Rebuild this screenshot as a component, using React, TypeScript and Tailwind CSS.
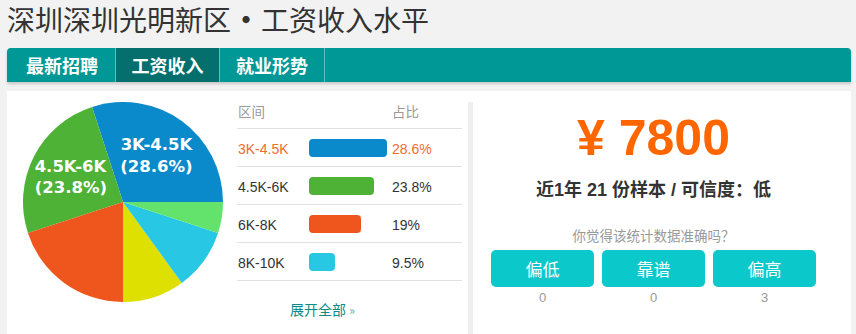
import React from "react";

const slices = [
  { v: 6, c: "#0a8acb" },
  { v: 5, c: "#4db236" },
  { v: 4, c: "#ee561e" },
  { v: 2, c: "#dde000" },
  { v: 2, c: "#28c8e4" },
  { v: 1, c: "#64e36c" },
];

function arcPath(a0: number, a1: number, r = 100, cx = 100, cy = 100) {
  const rad = (d: number) => (d * Math.PI) / 180;
  const x0 = cx + r * Math.cos(rad(a0));
  const y0 = cy - r * Math.sin(rad(a0));
  const x1 = cx + r * Math.cos(rad(a1));
  const y1 = cy - r * Math.sin(rad(a1));
  const large = a1 - a0 > 180 ? 1 : 0;
  return `M${cx},${cy} L${x0},${y0} A${r},${r} 0 ${large} 0 ${x1},${y1} Z`;
}

function Pie() {
  const total = slices.reduce((s, x) => s + x.v, 0);
  let a = 0;
  const paths = slices.map((s, i) => {
    const a0 = a;
    const a1 = a + (s.v / total) * 360;
    a = a1;
    return <path key={i} d={arcPath(a0, a1)} fill={s.c} />;
  });
  const t = {
    fontFamily: "'DejaVu Sans', sans-serif",
    fontWeight: 700,
    fontSize: "16.5px",
    fill: "#fff",
  } as React.CSSProperties;
  return (
    <svg width="200" height="200" viewBox="0 0 200 200" className="block">
      {paths}
      <text x="133.5" y="48" textAnchor="middle" style={t}>3K-4.5K</text>
      <text x="133.5" y="70" textAnchor="middle" style={t}>(28.6%)</text>
      <text x="47.5" y="70" textAnchor="middle" style={t}>4.5K-6K</text>
      <text x="48" y="91" textAnchor="middle" style={t}>(23.8%)</text>
    </svg>
  );
}

const rows = [
  { label: "3K-4.5K", pct: "28.6%", bar: "w-[78px] bg-[#0a8acb]", hi: true },
  { label: "4.5K-6K", pct: "23.8%", bar: "w-[65px] bg-[#4db236]", hi: false },
  { label: "6K-8K", pct: "19%", bar: "w-[52px] bg-[#ee561e]", hi: false },
  { label: "8K-10K", pct: "9.5%", bar: "w-[26px] bg-[#28c8e4]", hi: false },
];

export default function App() {
  return (
    <div className="w-[856px] h-[334px] overflow-hidden bg-[#f2f2f2] font-['Liberation_Sans','Noto_Sans_CJK_SC',sans-serif]">
      <h1 className="pl-[7px] h-[38px] flex items-center text-[28px] leading-[38px] font-normal text-[#333] font-['Noto_Sans_CJK_SC',sans-serif] whitespace-nowrap">
        <span>深圳深圳光明新区</span>
        <span className="inline-block w-[30px] text-center font-bold">•</span>
        <span>工资收入水平</span>
      </h1>
      <div className="ml-[7px] mr-[5px] mt-[10px] h-[34px] bg-[#009896] rounded-t-[4px] flex shadow-[0_2px_3px_rgba(0,0,0,0.18)] font-['Noto_Sans_CJK_SC',sans-serif]">
        <div className="w-[109px] border-r border-[#5fbfbd] flex items-center justify-center text-white text-[18px] font-bold pl-[2px]">
          最新招聘
        </div>
        <div className="w-[104px] border-r border-[#5fbfbd] bg-[#046f6d] flex items-center justify-center text-white text-[18px] font-bold">
          工资收入
        </div>
        <div className="w-[105px] border-r border-[#5fbfbd] flex items-center justify-center text-white text-[18px] font-bold">
          就业形势
        </div>
      </div>
      <div className="ml-[7px] mr-[5px] mt-[9px] h-[243px] bg-white flex">
        <div className="w-[461px] flex">
          <div className="pl-[16px] pt-[11px]">
            <Pie />
          </div>
          <div className="ml-[14px] w-[225px] pt-[8px]">
            <div className="h-[30px] border-b border-[#e2e2e2] flex items-center text-[13.5px] text-[#999]">
              <div className="w-[155px] pl-[1px]">区间</div>
              <div>占比</div>
            </div>
            {rows.map((r) => (
              <div
                key={r.label}
                className={`h-[38px] border-b border-[#e2e2e2] flex items-center text-[14px] ${r.hi ? "text-[#f26b2f]" : "text-[#333]"}`}
              >
                <div className="w-[72px] pl-[1px] pt-[3px]">{r.label}</div>
                <div className="w-[83px] pt-[1px]">
                  <div className={`h-[18px] rounded-[4px] ${r.bar}`} />
                </div>
                <div className="pt-[3px]">{r.pct}</div>
              </div>
            ))}
            <div className="pl-[53px] mt-[18px] text-[14px] leading-[20px] text-[#0a8a88] font-['Noto_Sans_CJK_SC',sans-serif]">
              展开全部 <span className="text-[12px] text-[#6aa]">»</span>
            </div>
          </div>
        </div>
        <div className="w-[5px] mt-[11px] bg-[#eeeeee]" />
        <div className="flex-1 pl-[18px]">
          <div className="w-[325px] text-center">
            <div className="pt-[22px] text-[50px] leading-[50px] font-bold text-[#ff6600]">¥ 7800</div>
            <div className="mt-[15px] text-[18px] leading-[24px] font-bold text-[#333]">
              近1年 21 份样本 / 可信度：低
            </div>
            <div className="mt-[23px] text-[13.5px] leading-[20px] text-[#999] font-['Noto_Sans_CJK_SC',sans-serif]">
              你觉得该统计数据准确吗？
            </div>
            <div className="mt-[5px] grid grid-cols-3 gap-[8px]">
              {["偏低", "靠谱", "偏高"].map((b) => (
                <div
                  key={b}
                  className="h-[37px] rounded-[5px] bg-[#0bc9cb] text-white text-[17px] flex items-center justify-center font-['Noto_Sans_CJK_SC',sans-serif]"
                >
                  {b}
                </div>
              ))}
            </div>
            <div className="mt-[3px] grid grid-cols-3 gap-[8px] text-[13px] leading-[16px] text-[#999]">
              <div>0</div>
              <div>0</div>
              <div>3</div>
            </div>
          </div>
        </div>
      </div>
    </div>
  );
}
